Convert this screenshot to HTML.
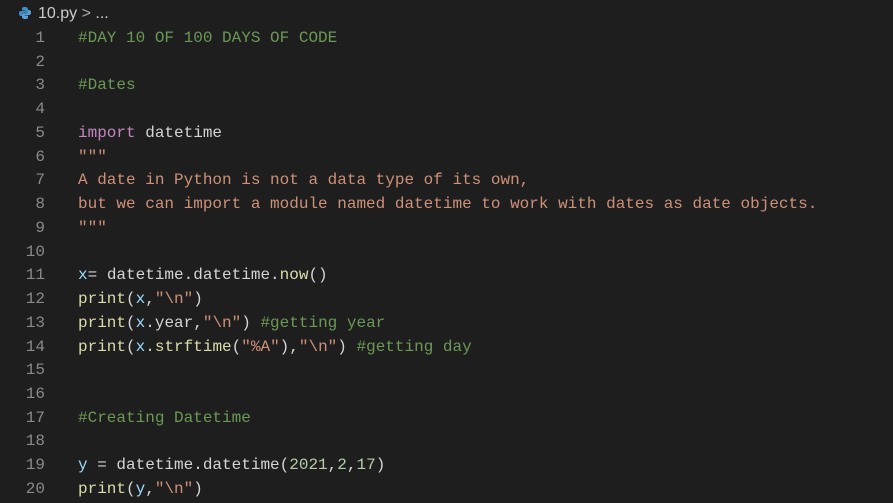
<!DOCTYPE html>
<html><head><style>
body{margin:0;background:#1e1e1e;width:893px;height:503px;overflow:hidden;font-family:"Liberation Mono",monospace;font-size:16px;color:#d4d4d4}
.bc{position:absolute;left:18px;top:3px;height:22px;font-family:"Liberation Sans",sans-serif;font-size:16px;color:#cccccc;line-height:22px}
.code{position:absolute;left:0;top:27px}
.l{height:23.74px;line-height:23.74px;white-space:pre;position:relative}
.n{position:absolute;left:0;width:45px;text-align:right;color:#8a8a8a}
.t{position:absolute;left:78px}
.c{color:#6a9955}.k{color:#c586c0}.s{color:#ce9178}.f{color:#dcdcaa}.v{color:#9cdcfe}.m{color:#b5cea8}
</style></head><body>
<div class="bc"><svg width="14" height="14" viewBox="0 0 14 14" style="vertical-align:-2px;margin-right:6px"><path d="M7 1C4 1 4 2 4 3v1.5h3.2V5H2.8C1.5 5 1 6.2 1 7.5S1.5 10 2.8 10H4V8.4C4 7.4 4.8 6.8 5.7 6.8h3C9.5 6.8 10 6.3 10 5.5V3C10 2 9 1 7 1z" fill="#3e8dc7"/><path d="M7 13c3 0 3-1 3-2V9.5H6.8V9h4.4C12.5 9 13 7.8 13 6.5S12.5 4 11.2 4H10v1.6c0 1-.8 1.6-1.7 1.6h-3C4.5 7.2 4 7.7 4 8.5V11c0 1 1 2 3 2z" fill="#5aa0d6"/></svg>10.py <span style="color:#aaa">&gt;</span> ...</div>
<div class="code">
<div class="l"><span class="n">1</span><span class="t c">#DAY 10 OF 100 DAYS OF CODE</span></div>
<div class="l"><span class="n">2</span></div>
<div class="l"><span class="n">3</span><span class="t c">#Dates</span></div>
<div class="l"><span class="n">4</span></div>
<div class="l"><span class="n">5</span><span class="t"><span class="k">import</span> datetime</span></div>
<div class="l"><span class="n">6</span><span class="t s">"""</span></div>
<div class="l"><span class="n">7</span><span class="t s">A date in Python is not a data type of its own,</span></div>
<div class="l"><span class="n">8</span><span class="t s">but we can import a module named datetime to work with dates as date objects.</span></div>
<div class="l"><span class="n">9</span><span class="t s">"""</span></div>
<div class="l"><span class="n">10</span></div>
<div class="l"><span class="n">11</span><span class="t"><span class="v">x</span>= datetime.datetime.<span class="f">now</span>()</span></div>
<div class="l"><span class="n">12</span><span class="t"><span class="f">print</span>(<span class="v">x</span>,<span class="s">"\n"</span>)</span></div>
<div class="l"><span class="n">13</span><span class="t"><span class="f">print</span>(<span class="v">x</span>.year,<span class="s">"\n"</span>) <span class="c">#getting year</span></span></div>
<div class="l"><span class="n">14</span><span class="t"><span class="f">print</span>(<span class="v">x</span>.<span class="f">strftime</span>(<span class="s">"%A"</span>),<span class="s">"\n"</span>) <span class="c">#getting day</span></span></div>
<div class="l"><span class="n">15</span></div>
<div class="l"><span class="n">16</span></div>
<div class="l"><span class="n">17</span><span class="t c">#Creating Datetime</span></div>
<div class="l"><span class="n">18</span></div>
<div class="l"><span class="n">19</span><span class="t"><span class="v">y</span> = datetime.datetime(<span class="m">2021</span>,<span class="m">2</span>,<span class="m">17</span>)</span></div>
<div class="l"><span class="n">20</span><span class="t"><span class="f">print</span>(<span class="v">y</span>,<span class="s">"\n"</span>)</span></div>
</div>
</body></html>
